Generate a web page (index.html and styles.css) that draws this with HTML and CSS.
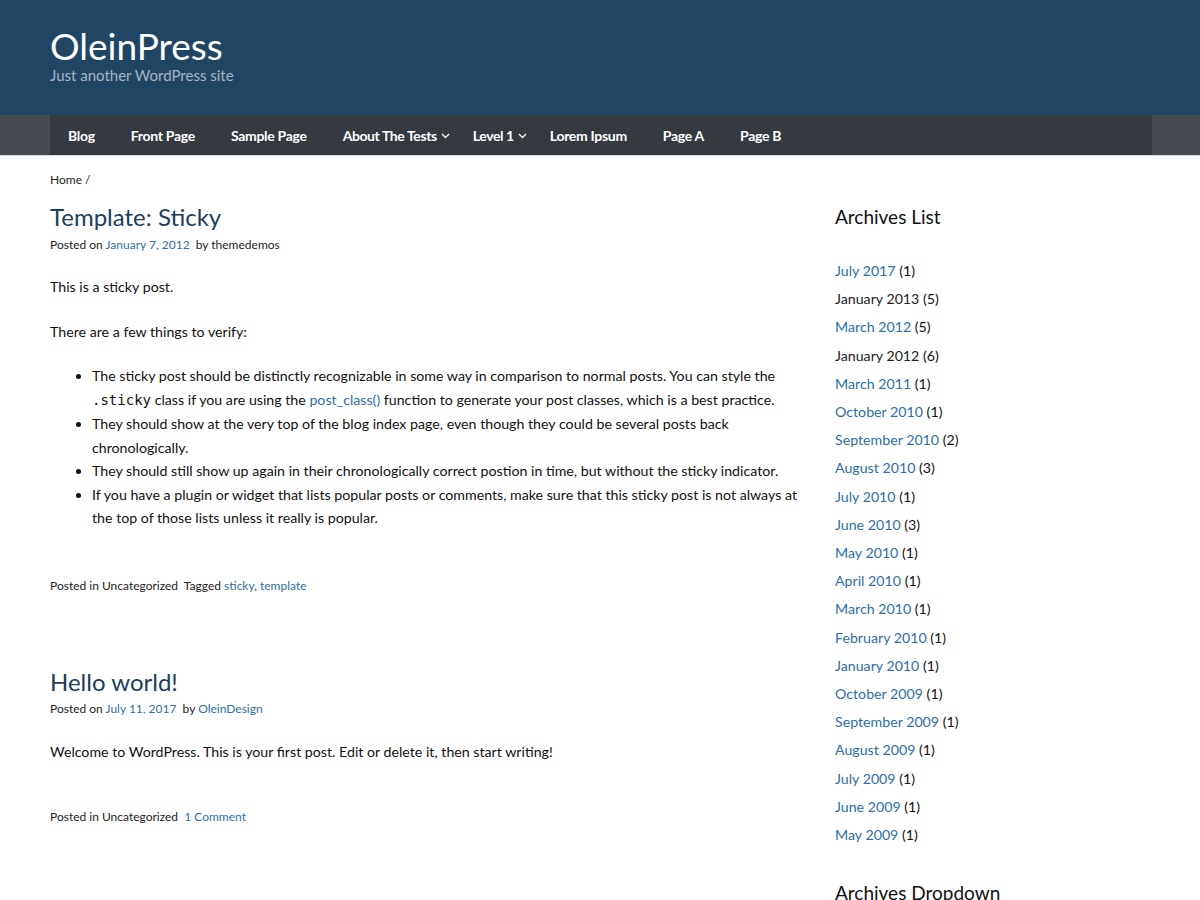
FILE: index.html
```html
<!DOCTYPE html>
<html>
<head>
<meta charset="utf-8">
<link rel="stylesheet" href="styles.css">
</head>
<body>
<header class="site-header">
  <div class="wrap">
    <h1 class="site-title">OleinPress</h1>
    <p class="site-desc">Just another WordPress site</p>
  </div>
</header>
<nav class="main-nav">
  <ul class="menu">
    <li><a href="#">Blog</a></li>
    <li><a href="#">Front Page</a></li>
    <li><a href="#">Sample Page</a></li>
    <li><a class="has-sub" href="#">About The Tests <svg class="caret" width="9" height="6" viewBox="0 0 9 6"><path d="M1 1l3.5 3.5L8 1" fill="none" stroke="#fff" stroke-width="1.3"/></svg></a></li>
    <li><a class="has-sub" href="#">Level 1 <svg class="caret" width="9" height="6" viewBox="0 0 9 6"><path d="M1 1l3.5 3.5L8 1" fill="none" stroke="#fff" stroke-width="1.3"/></svg></a></li>
    <li><a href="#">Lorem Ipsum</a></li>
    <li><a href="#">Page A</a></li>
    <li><a href="#">Page B</a></li>
  </ul>
</nav>
<div class="container">
  <div class="breadcrumb">Home /</div>
  <div class="layout">
    <main class="content">
      <article class="post">
        <h2 class="entry-title">Template: Sticky</h2>
        <div class="entry-meta">Posted on <a href="#">January 7, 2012</a> &nbsp;by <a class="plain" href="#">themedemos</a></div>
        <div class="entry-content">
          <p>This is a sticky post.</p>
          <p>There are a few things to verify:</p>
          <ul>
            <li>The sticky post should be distinctly recognizable in some way in comparison to normal posts. You can style the <code>.sticky</code> class if you are using the <a href="#">post_class()</a> function to generate your post classes, which is a best practice.</li>
            <li>They should show at the very top of the blog index page, even though they could be several posts back chronologically.</li>
            <li>They should still show up again in their chronologically correct postion in time, but without the sticky indicator.</li>
            <li>If you have a plugin or widget that lists popular posts or comments, make sure that this sticky post is not always at the top of those lists unless it really is popular.</li>
          </ul>
        </div>
        <div class="entry-footer">Posted in <a class="dark" href="#">Uncategorized</a> &nbsp;Tagged <a href="#">sticky</a>, <a href="#">template</a></div>
      </article>
      <article class="post">
        <h2 class="entry-title">Hello world!</h2>
        <div class="entry-meta">Posted on <a href="#">July 11, 2017</a> &nbsp;by <a href="#">OleinDesign</a></div>
        <div class="entry-content">
          <p>Welcome to WordPress. This is your first post. Edit or delete it, then start writing!</p>
        </div>
        <div class="entry-footer">Posted in <a class="dark" href="#">Uncategorized</a> &nbsp;<a href="#">1 Comment</a></div>
      </article>
    </main>
    <aside class="sidebar">
      <section class="widget">
        <h3 class="widget-title">Archives List</h3>
        <ul class="archives">
          <li><a href="#">July 2017</a> (1)</li>
          <li><a class="dark" href="#">January 2013</a> (5)</li>
          <li><a href="#">March 2012</a> (5)</li>
          <li><a class="dark" href="#">January 2012</a> (6)</li>
          <li><a href="#">March 2011</a> (1)</li>
          <li><a href="#">October 2010</a> (1)</li>
          <li><a href="#">September 2010</a> (2)</li>
          <li><a href="#">August 2010</a> (3)</li>
          <li><a href="#">July 2010</a> (1)</li>
          <li><a href="#">June 2010</a> (3)</li>
          <li><a href="#">May 2010</a> (1)</li>
          <li><a href="#">April 2010</a> (1)</li>
          <li><a href="#">March 2010</a> (1)</li>
          <li><a href="#">February 2010</a> (1)</li>
          <li><a href="#">January 2010</a> (1)</li>
          <li><a href="#">October 2009</a> (1)</li>
          <li><a href="#">September 2009</a> (1)</li>
          <li><a href="#">August 2009</a> (1)</li>
          <li><a href="#">July 2009</a> (1)</li>
          <li><a href="#">June 2009</a> (1)</li>
          <li><a href="#">May 2009</a> (1)</li>
        </ul>
      </section>
      <section class="widget">
        <h3 class="widget-title">Archives Dropdown</h3>
      </section>
    </aside>
  </div>
</div>
</body>
</html>
```
FILE: styles.css
```css
* { box-sizing: border-box; }
html, body { margin: 0; padding: 0; }
body {
  font-family: Lato, "Open Sans", sans-serif;
  color: #111;
  background: #fff;
  font-size: 14.2px;
}
a { color: #2f6ea6; text-decoration: none; }
a.dark, a.plain { color: #222; }
.site-header {
  background: #204663;
  height: 115px;
  padding: 26px 50px 0;
}
.site-title {
  margin: 0;
  font-size: 37px;
  font-weight: 400;
  color: #fff;
  line-height: 40px;
}
.site-desc {
  margin: 0;
  color: #a8b3be;
  font-size: 15px;
  line-height: 18px;
}
.main-nav {
  background: #474c52;
  height: 41px;
  border-bottom: 1px solid #d6d8da;
  padding: 0 48px 0 50px;
}
.menu {
  list-style: none;
  margin: 0;
  padding: 0;
  display: flex;
  background: #353a40;
  height: 40px;
}
.menu li a {
  display: flex;
  align-items: center;
  gap: 4px;
  height: 40px;
  padding: 0 18px;
  color: #fff;
  font-weight: 700;
  font-size: 14px;
  letter-spacing: -0.3px;
}
.menu li a.has-sub { padding-right: 5px; letter-spacing: -0.4px; }
.caret { margin-top: 1px; }
.container { padding: 0 50px; }
.breadcrumb {
  font-size: 12px;
  margin-top: 17px;
  color: #222;
  line-height: 14px;
}
.layout {
  display: grid;
  grid-template-columns: 750px 1fr;
  gap: 35px;
}
.content { padding-top: 14px; }
.entry-title {
  margin: 0;
  font-size: 24px;
  font-weight: 400;
  color: #1d3e5a;
  line-height: 32px;
}
.entry-meta {
  font-size: 12px;
  line-height: 16px;
  margin-top: 4px;
  color: #222;
}
.entry-content { margin-top: 22px; }
.entry-content p {
  margin: 0 0 21px;
  line-height: 23.5px;
}
.entry-content ul {
  margin: 0;
  padding-left: 42px;
  line-height: 23.5px;
}
code {
  font-family: "DejaVu Sans Mono", monospace;
  font-size: 14px;
}
.entry-footer {
  font-size: 12px;
  line-height: 16px;
  margin-top: 48px;
  color: #222;
}
.post + .post { margin-top: 72px; }
.post + .post .entry-meta { margin-top: 3px; }
.post + .post .entry-content { margin-top: 23px; }
.post + .post .entry-footer { margin-top: 46px; }
.sidebar { padding-top: 17px; }
.widget-title {
  margin: 0;
  font-size: 19px;
  font-weight: 400;
  color: #111;
  line-height: 26px;
}
.archives {
  list-style: none;
  margin: 27px 0 0;
  padding: 0;
}
.archives li {
  line-height: 28.2px;
}
.widget + .widget { margin-top: 31px; }
```
